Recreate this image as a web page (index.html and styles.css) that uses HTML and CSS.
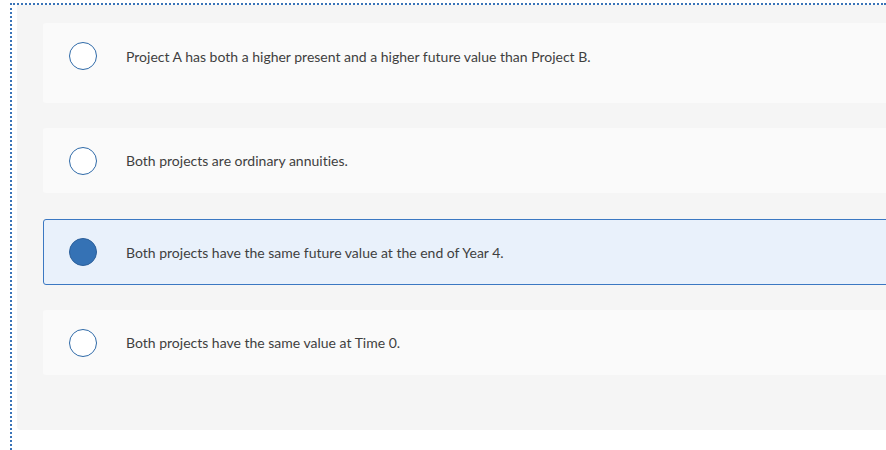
FILE: index.html
```html
<!DOCTYPE html>
<html>
<head>
<meta charset="utf-8">
<link rel="stylesheet" href="styles.css">
</head>
<body>
<div class="frame">
  <div class="panel">
    <div class="option tall">
      <span class="radio"></span>
      <span class="label">Project A has both a higher present and a higher future value than Project B.</span>
    </div>
    <div class="option">
      <span class="radio"></span>
      <span class="label">Both projects are ordinary annuities.</span>
    </div>
    <div class="option selected">
      <span class="radio"></span>
      <span class="label">Both projects have the same future value at the end of Year 4.</span>
    </div>
    <div class="option">
      <span class="radio"></span>
      <span class="label">Both projects have the same value at Time 0.</span>
    </div>
  </div>
</div>
</body>
</html>
```

FILE: styles.css
```css
html, body {
  margin: 0;
  padding: 0;
  background: #ffffff;
  overflow: hidden;
}
body {
  width: 886px;
  height: 450px;
  font-family: "Lato", "Open Sans", sans-serif;
}
.frame {
  margin: 3px 0 0 10px;
  height: 447px;
  border-top: 2px dotted #3a74b8;
  border-left: 2px dotted #3a74b8;
  box-sizing: border-box;
  padding-left: 5px;
}
.panel {
  background: #f5f5f5;
  height: 425px;
  box-sizing: border-box;
  padding: 18px 0 0 26px;
  border-bottom-left-radius: 4px;
  display: flex;
  flex-direction: column;
  gap: 25px;
  margin-right: -20px;
}
.option {
  background: #fafafa;
  height: 65px;
  border-radius: 3px;
  display: flex;
  align-items: center;
  padding-left: 25px;
  box-sizing: border-box;
  border: 1px solid transparent;
}
.option.tall {
  height: 80px;
  padding-bottom: 14px;
}
.option.selected {
  background: #e9f1fb;
  border-color: #3b78c2;
  margin-top: 1px;
  height: 66px;
}
.radio {
  width: 28px;
  height: 28px;
  border-radius: 50%;
  border: 1.5px solid #2f6aa8;
  background: #ffffff;
  box-sizing: border-box;
  flex: none;
}
.selected .radio {
  background: #3572b5;
  border-color: #2b5f9a;
}
.label {
  margin-left: 29px;
  font-size: 14px;
  color: #3f3f3f;
  font-variant-ligatures: none;
}
```
